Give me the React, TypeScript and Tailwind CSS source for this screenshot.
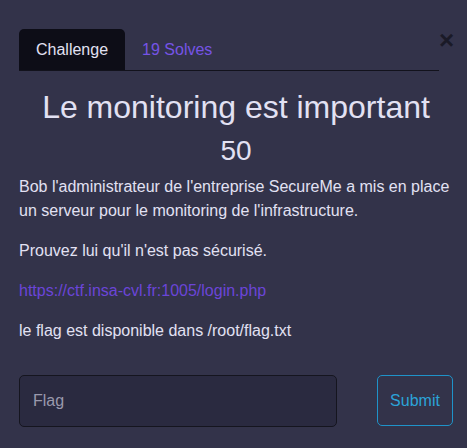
import React from "react";

const App = () => {
  return (
    <div className="w-[467px] h-[448px] overflow-hidden bg-[#33334a] text-[#e2e1f3] font-['Liberation_Sans',Arial,sans-serif]">
      <div className="px-[14px] pl-[19px] pt-[29px]">
        {/* Header: tabs + close */}
        <div className="flex items-start">
          <div className="flex flex-1 border-b border-[#12121c]">
            <div className="h-[41px] px-[17px] flex items-center rounded-t-[5px] bg-[#0d0d17] text-[16px] text-[#e2e1f3]">
              Challenge
            </div>
            <div className="h-[41px] px-[17px] flex items-center text-[16px] text-[#7654e6]">
              19 Solves
            </div>
          </div>
          <button className="mt-[-2px] w-[14px] text-[26px] font-bold leading-none text-[#15151f] opacity-80">
            ×
          </button>
        </div>

        <h2 className="mt-[17px] text-center text-[32px] leading-[38px]">Le monitoring est important</h2>
        <div className="mt-[8px] text-center text-[28px] leading-[34px]">50</div>

        <div className="mt-[7px] text-[16px] leading-[24px]">
          <p className="mb-[16px]">
            Bob l'administrateur de l'entreprise SecureMe a mis en place un serveur pour le monitoring de l'infrastructure.
          </p>
          <p className="mb-[16px]">Prouvez lui qu'il n'est pas sécurisé.</p>
          <p className="mb-[16px]">
            <a className="text-[#6b45d8]" href="#">https://ctf.insa-cvl.fr:1005/login.php</a>
          </p>
          <p>le flag est disponible dans /root/flag.txt</p>
        </div>

        <div className="mt-[32px] flex items-start justify-between">
          <input
            placeholder="Flag"
            className="w-[318px] h-[52px] rounded-[5px] border border-[#15151f] bg-[#2a2a40] px-[13px] text-[16px] text-[#e2e1f3] placeholder:text-[#9a99ad] outline-none"
          />
          <button className="h-[51px] w-[76px] rounded-[5px] border border-[#1f93c9] text-[16px] text-[#2ba3d8]">
            Submit
          </button>
        </div>
      </div>
    </div>
  );
};

export default App;
